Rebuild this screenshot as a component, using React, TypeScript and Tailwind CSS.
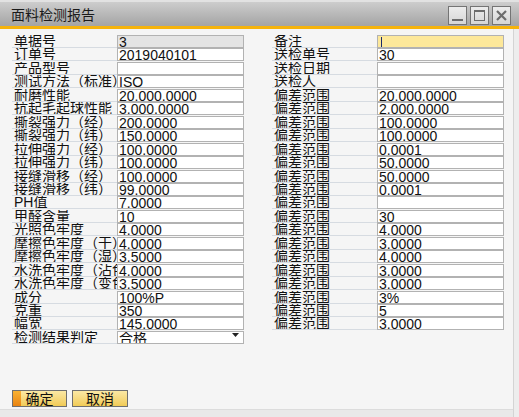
import React from "react";

const FONT = { fontFamily: '"Liberation Sans", "Noto Sans CJK SC", sans-serif' };

type Row = { label: string; value: string; kind?: "gray" | "yellow" | "select" };

const left: Row[] = [
  { label: "单据号", value: "3", kind: "gray" },
  { label: "订单号", value: "2019040101" },
  { label: "产品型号", value: "" },
  { label: "测试方法（标准）", value: "ISO" },
  { label: "耐磨性能", value: "20,000.0000" },
  { label: "抗起毛起球性能（级）", value: "3.000.0000" },
  { label: "撕裂强力（经）", value: "200.0000" },
  { label: "撕裂强力（纬）", value: "150.0000" },
  { label: "拉伸强力（经）", value: "100.0000" },
  { label: "拉伸强力（纬）", value: "100.0000" },
  { label: "接缝滑移（经）", value: "100.0000" },
  { label: "接缝滑移（纬）", value: "99.0000" },
  { label: "PH值", value: "7.0000" },
  { label: "甲醛含量", value: "10" },
  { label: "光照色牢度", value: "4.0000" },
  { label: "摩擦色牢度（干）", value: "4.0000" },
  { label: "摩擦色牢度（湿）", value: "3.5000" },
  { label: "水洗色牢度（沾色）", value: "4.0000" },
  { label: "水洗色牢度（变色）", value: "3.5000" },
  { label: "成分", value: "100%P" },
  { label: "克重", value: "350" },
  { label: "幅宽", value: "145.0000" },
  { label: "检测结果判定", value: "合格", kind: "select" },
];

const rightVals = [
  "20,000.0000",
  "2.000.0000",
  "100.0000",
  "100.0000",
  "0.0001",
  "50.0000",
  "50.0000",
  "0.0001",
  "",
  "30",
  "4.0000",
  "3.0000",
  "4.0000",
  "3.0000",
  "3.0000",
  "3%",
  "5",
  "3.0000",
];

const right: Row[] = [
  { label: "备注", value: "", kind: "yellow" },
  { label: "送检单号", value: "30" },
  { label: "送检日期", value: "" },
  { label: "送检人", value: "" },
  ...rightVals.map((v) => ({ label: "偏差范围", value: v })),
];

function tall(i: number) {
  return Math.round((i + 1) * 13.45) - Math.round(i * 13.45) === 14;
}

function FieldRow({ row, i }: { row: Row; i: number }) {
  const bg =
    row.kind === "gray" ? "bg-[#e4e4e4]" : row.kind === "yellow" ? "bg-[#fde89a]" : "bg-white";
  return (
    <div className={`flex shrink-0 ${tall(i) ? "h-[14px]" : "h-[13px]"}`}>
      <div className="w-[105px] h-[13px] border-b border-[#d6dbe1] overflow-hidden whitespace-nowrap pl-[2px] text-[14px] leading-[12px] text-[#111]">
        {row.label}
      </div>
      <div
        className={`relative w-[127px] h-[13px] border border-[#b2b2b2] ${bg} overflow-hidden whitespace-nowrap pl-[1px] text-[14px] leading-[12px] text-[#111]`}
      >
        {row.value}
        {row.kind === "yellow" && (
          <div className="absolute left-[3px] top-[1px] w-[1px] h-[10px] bg-[#1a2a6a]" />
        )}
        {row.kind === "select" && (
          <svg className="absolute right-[4px] top-[1px]" width="7" height="4" viewBox="0 0 7 4">
            <path d="M0 0 H7 L3.5 4 Z" fill="#222" />
          </svg>
        )}
      </div>
    </div>
  );
}

function WinBtn({ children }: { children: React.ReactNode }) {
  return (
    <div className="w-[19px] h-[19px] border border-[#747474] bg-gradient-to-b from-[#ececec] to-[#d6d6d6] flex items-center justify-center">
      {children}
    </div>
  );
}

export default function App() {
  return (
    <div className="w-[519px] h-[417px] bg-[#e9e9e9] flex flex-col overflow-hidden" style={FONT}>
      <div className="h-[2px] bg-[#e2e2e2]" />
      <div className="h-[24px] bg-gradient-to-b from-[#cdcdcd] to-[#a4a4a4] flex items-center justify-between pl-[11px] pr-[8px]">
        <div className="text-[14px] leading-[14px] text-[#1a1a1a] pt-[2px]">面料检测报告</div>
        <div className="flex gap-[3px] pt-[2px]">
          <WinBtn>
            <svg width="11" height="11" viewBox="0 0 11 11">
              <rect x="0" y="9" width="11" height="2" fill="#6c6c6c" />
            </svg>
          </WinBtn>
          <WinBtn>
            <svg width="11" height="11" viewBox="0 0 11 11">
              <rect x="0.5" y="0.5" width="10" height="10" fill="none" stroke="#6c6c6c" />
              <rect x="0" y="0" width="11" height="2" fill="#6c6c6c" />
            </svg>
          </WinBtn>
          <WinBtn>
            <svg width="11" height="11" viewBox="0 0 11 11">
              <path d="M1 1 L10 10 M10 1 L1 10" stroke="#6c6c6c" strokeWidth="2.2" />
            </svg>
          </WinBtn>
        </div>
      </div>
      <div className="h-[3px] bg-[#f5b30c]" />
      <div className="flex-1 flex">
        <div className="w-[513px] h-[381px] bg-[#f5f5f5] border-b border-[#dcdcdc] flex flex-col">
          <div className="flex pl-[12px] pt-[6px] gap-[28px]">
            <div className="flex flex-col">
              {left.map((r, i) => (
                <FieldRow key={i} row={r} i={i} />
              ))}
            </div>
            <div className="flex flex-col">
              {right.map((r, i) => (
                <FieldRow key={i} row={r} i={i} />
              ))}
            </div>
          </div>
          <div className="mt-auto mb-[1px] flex gap-[5px] pl-[12px] pb-[1px]">
            <button className="relative w-[55px] h-[17px] border border-[#6f6f6f] bg-gradient-to-b from-[#fbe8a4] to-[#f1cb55] text-[14px] leading-[14px] text-[#111] flex items-center justify-center overflow-hidden">
              <div className="absolute left-0 top-0 bottom-0 w-[8px] bg-gradient-to-b from-[#f8b233] to-[#e9830f]" />
              <span className="relative">确定</span>
            </button>
            <button className="w-[56px] h-[17px] border border-[#6f6f6f] bg-gradient-to-b from-[#fbe8a4] to-[#f1cb55] text-[14px] leading-[14px] text-[#111] flex items-center justify-center">
              取消
            </button>
          </div>
        </div>
        <div className="flex-1 border-l border-[#d4d4d4] bg-[#ededed]" />
      </div>
    </div>
  );
}
